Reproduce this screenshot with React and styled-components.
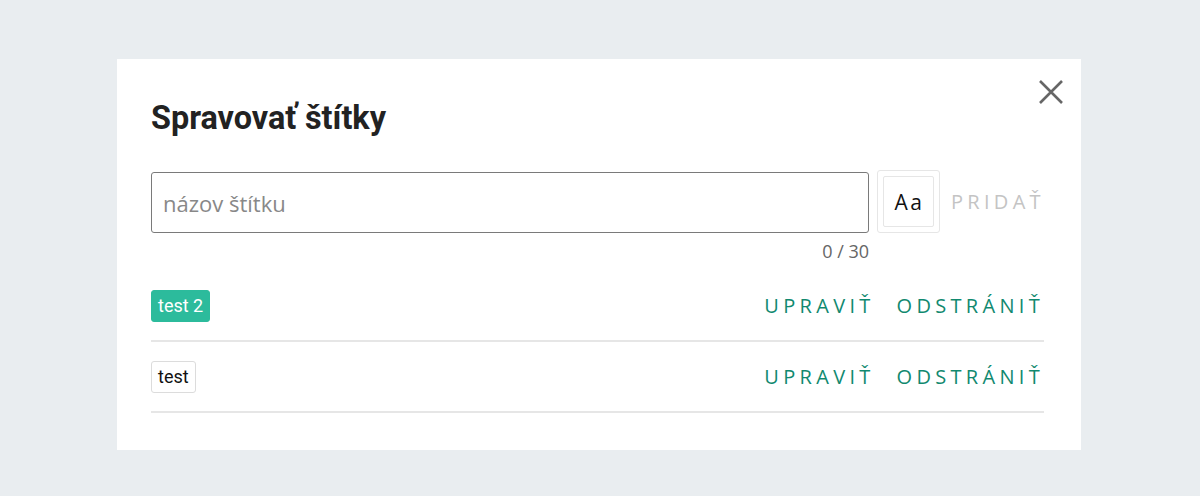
import React from "react";
import styled, { createGlobalStyle } from "styled-components";

const Global = createGlobalStyle`
  html, body { margin: 0; padding: 0; }
  body { background: #e9edf0; font-family: "Open Sans", sans-serif; }
`;

const Page = styled.div`
  width: 1200px;
  height: 496px;
  padding: 59px 0 0 117px;
  box-sizing: border-box;
`;

const Modal = styled.div`
  position: relative;
  width: 964px;
  height: 391px;
  box-sizing: border-box;
  background: #fff;
  padding: 36px 37px 0 34px;
`;

const Close = styled.button`
  position: absolute;
  top: 16px;
  right: 13px;
  width: 34px;
  height: 34px;
  padding: 0;
  border: 0;
  background: none;
  display: flex;
  align-items: center;
  justify-content: center;
  cursor: pointer;
`;

const Title = styled.h2`
  margin: 0;
  font-family: Roboto, sans-serif;
  font-weight: 700;
  font-size: 32.4px;
  line-height: 46px;
  color: #222;
`;

const InputRow = styled.div`
  display: flex;
  align-items: center;
  margin-top: 31px;
`;

const InputWrap = styled.div`
  flex: 0 0 718px;
  display: flex;
  flex-direction: column;
  align-items: flex-end;
`;

const TextInput = styled.input`
  width: 100%;
  height: 61px;
  box-sizing: border-box;
  border: 1.5px solid #7a7a7a;
  border-radius: 3px;
  padding: 0 11px;
  font-family: "Open Sans", sans-serif;
  font-size: 22px;
  color: #222;
  outline: none;
  &::placeholder { color: #888; }
`;

const Counter = styled.div`
  margin-top: 6px;
  font-family: "Open Sans", sans-serif;
  font-size: 18px;
  color: #666;
  line-height: 24px;
`;

const Side = styled.div`
  display: flex;
  align-items: center;
  align-self: flex-start;
  margin-top: -2px;
`;

const StyleBtn = styled.div`
  margin-left: 8px;
  width: 63px;
  height: 63px;
  box-sizing: border-box;
  border: 1.5px solid #e6e6e6;
  border-radius: 3px;
  padding: 5px;
  display: flex;
`;

const StyleInner = styled.div`
  flex: 1;
  border: 1.5px solid #e6e6e6;
  border-radius: 2px;
  display: flex;
  align-items: center;
  justify-content: center;
  font-family: "Open Sans", sans-serif;
  font-size: 21px;
  letter-spacing: 2.5px;
  padding-left: 2px;
  color: #111;
`;

const TextButton = styled.button`
  border: 0;
  background: none;
  padding: 0;
  font-family: "Open Sans", sans-serif;
  font-size: 20px;
  letter-spacing: 4.3px;
  color: ${p => (p.$disabled ? "#c4c4c4" : "#11896f")};
  cursor: pointer;
  line-height: 26px;
`;

const AddButton = styled(TextButton)`
  margin-left: 11px;
`;

const List = styled.div`
  margin-top: 8px;
`;

const Row = styled.div`
  display: flex;
  align-items: center;
  justify-content: space-between;
  height: 69px;
  border-bottom: 2px solid #e6e6e6;
`;

const Tag = styled.span`
  font-family: Roboto, sans-serif;
  font-size: 18px;
  line-height: 30px;
  padding: 0 6px;
  border-radius: 3px;
  border: 1px solid ${p => (p.$bg ? p.$bg : "#dcdcdc")};
  background: ${p => p.$bg || "#fff"};
  color: ${p => p.$fg || "#111"};
`;

const Actions = styled.div`
  display: flex;
  gap: 22px;
`;

const tags = [
  { name: "test 2", bg: "#2cbb9c", fg: "#fff" },
  { name: "test" },
];

export default function App() {
  return (
    <>
      <Global />
      <Page>
        <Modal>
          <Close aria-label="close">
            <svg width="26" height="26" viewBox="0 0 26 26">
              <path d="M2 2 L24 24 M24 2 L2 24" stroke="#666" strokeWidth="2.6" />
            </svg>
          </Close>
          <Title>Spravovať štítky</Title>
          <InputRow>
            <InputWrap>
              <TextInput placeholder="názov štítku" />
              <Counter>0 / 30</Counter>
            </InputWrap>
            <Side>
              <StyleBtn>
                <StyleInner>Aa</StyleInner>
              </StyleBtn>
              <AddButton $disabled>PRIDAŤ</AddButton>
            </Side>
          </InputRow>
          <List>
            {tags.map(t => (
              <Row key={t.name}>
                <Tag $bg={t.bg} $fg={t.fg}>{t.name}</Tag>
                <Actions>
                  <TextButton>UPRAVIŤ</TextButton>
                  <TextButton>ODSTRÁNIŤ</TextButton>
                </Actions>
              </Row>
            ))}
          </List>
        </Modal>
      </Page>
    </>
  );
}
